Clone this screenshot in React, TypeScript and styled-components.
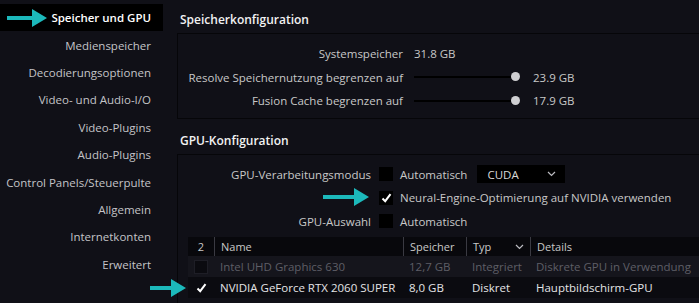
import styled, { createGlobalStyle } from "styled-components";

const Global = createGlobalStyle`
  html, body { margin: 0; padding: 0; background: #101017; }
  body { font-family: "Open Sans", "Noto Sans", sans-serif; font-size: 11.5px; color: #c8c8c8; }
`;

const Page = styled.div`
  display: flex;
  width: 699px;
  height: 303px;
  overflow: hidden;
  background: #101017;
`;

const Sidebar = styled.nav`
  width: 163px;
  flex-shrink: 0;
  padding-top: 4px;
  display: flex;
  flex-direction: column;
`;

const NavItem = styled.div<{ $active?: boolean }>`
  position: relative;
  height: 27.4px;
  display: flex;
  align-items: center;
  justify-content: flex-end;
  padding-right: 12px;
  background: ${(p) => (p.$active ? "#000" : "transparent")};
  color: ${(p) => (p.$active ? "#fff" : "#c4c4c8")};
  font-weight: ${(p) => (p.$active ? 600 : 400)};
  white-space: nowrap;
`;

const Arrow = styled.svg<{ $left: number; $top: number }>`
  position: absolute;
  left: ${(p) => p.$left}px;
  top: ${(p) => p.$top}px;
`;

const Main = styled.main`
  flex: 1;
  padding-left: 14px;
  display: flex;
  flex-direction: column;
`;

const Heading = styled.h2<{ $gap?: number }>`
  margin: 0;
  font-size: 12px;
  font-weight: 600;
  color: #f2f2f2;
  padding: ${(p) => p.$gap ?? 11}px 0 0 3px;
  height: 22px;
`;

const Box = styled.section<{ $grow?: boolean }>`
  border: 1px solid #060609;
  border-right: none;
  ${(p) => (p.$grow ? "border-bottom: none; flex: 1;" : "")}
  position: relative;
`;

const MemGrid = styled.div`
  display: grid;
  grid-template-columns: 225px 1fr;
  column-gap: 11px;
  padding: 8px 0 5px;
`;

const GpuGrid = styled.div`
  display: grid;
  grid-template-columns: 193px 1fr;
  column-gap: 8px;
  padding: 8px 0 4px;
`;

const Label = styled.div`
  height: 23.5px;
  display: flex;
  align-items: center;
  justify-content: flex-end;
  white-space: nowrap;
  position: relative;
`;

const Value = styled.div`
  height: 23.5px;
  display: flex;
  align-items: center;
  gap: 7px;
  white-space: nowrap;
`;

const SliderTrack = styled.div`
  position: relative;
  width: 102px;
  height: 2px;
  background: #000;
  margin-right: 10px;
`;

const Knob = styled.span`
  position: absolute;
  right: -4px;
  top: -4px;
  width: 9px;
  height: 9px;
  border-radius: 50%;
  background: #cfcfd2;
`;

const Check = styled.span<{ $dim?: boolean }>`
  width: 14px;
  height: 14px;
  background: ${(p) => (p.$dim ? "#0b0b10" : "#000")};
  border: ${(p) => (p.$dim ? "1px solid #1e1e26" : "none")};
  box-sizing: border-box;
  display: inline-flex;
  align-items: center;
  justify-content: center;
  flex-shrink: 0;
`;

const Select = styled.div`
  margin-left: 3px;
  width: 88px;
  height: 18px;
  background: #000;
  display: flex;
  align-items: center;
  justify-content: space-between;
  padding: 0 9px 0 10px;
  box-sizing: border-box;
  color: #d8d8d8;
`;

const Table = styled.div`
  margin-left: 10px;
  display: grid;
  grid-template-columns: 26px 189px 63px 64px 1fr;
`;

const HeadCell = styled.div<{ $center?: boolean }>`
  height: 19px;
  background: #08080c;
  display: flex;
  align-items: center;
  justify-content: ${(p) => (p.$center ? "center" : "space-between")};
  padding: 0 6px;
  border-left: 1px solid #3a3a42;
  color: #c8c8c8;
  font-size: 11px;
  &:first-child { border-left: none; }
`;

const Cell = styled.div<{ $dim?: boolean; $alt?: boolean; $first?: boolean }>`
  height: 21px;
  display: flex;
  align-items: center;
  justify-content: ${(p) => (p.$first ? "center" : "flex-start")};
  padding: 0 6px;
  white-space: nowrap;
  overflow: hidden;
  background: ${(p) => (p.$alt ? "#15151c" : "#0b0b10")};
  color: ${(p) => (p.$dim ? "#5e5e66" : "#e4e4e6")};
`;

const PointerCell = styled(Cell)`
  position: relative;
  overflow: visible;
`;

const TealArrow = ({ left, top, w }: { left: number; top: number; w: number }) => (
  <Arrow $left={left} $top={top} width={w} height={18} viewBox={`0 0 ${w} 18`}>
    <path d={`M0 7 H${w - 15} V0 L${w} 9 L${w - 15} 18 V11 H0 Z`} fill="#1cb9bb" />
  </Arrow>
);

const Tick = () => (
  <svg width="11" height="10" viewBox="0 0 11 10">
    <path d="M1.5 5.5 L4.2 8.2 L9.5 1.2" stroke="#fff" strokeWidth="2" fill="none" />
  </svg>
);

const Chevron = () => (
  <svg width="9" height="6" viewBox="0 0 9 6">
    <path d="M1 1 L4.5 4.5 L8 1" stroke="#bdbdc2" strokeWidth="1.2" fill="none" />
  </svg>
);

const nav = [
  "Speicher und GPU",
  "Medienspeicher",
  "Decodierungsoptionen",
  "Video- und Audio-I/O",
  "Video-Plugins",
  "Audio-Plugins",
  "Control Panels/Steuerpulte",
  "Allgemein",
  "Internetkonten",
  "Erweitert",
];

export default function App() {
  return (
    <Page>
      <Global />
      <Sidebar>
        {nav.map((n, i) => (
          <NavItem key={n} $active={i === 0}>
            {i === 0 && <TealArrow left={7} top={5} w={40} />}
            {n}
          </NavItem>
        ))}
      </Sidebar>
      <Main>
        <Heading>Speicherkonfiguration</Heading>
        <Box>
          <MemGrid>
            <Label>Systemspeicher</Label>
            <Value>31.8 GB</Value>
            <Label>Resolve Speichernutzung begrenzen auf</Label>
            <Value>
              <SliderTrack>
                <Knob />
              </SliderTrack>
              23.9 GB
            </Value>
            <Label>Fusion Cache begrenzen auf</Label>
            <Value>
              <SliderTrack>
                <Knob />
              </SliderTrack>
              17.9 GB
            </Value>
          </MemGrid>
        </Box>
        <Heading $gap={13}>GPU-Konfiguration</Heading>
        <Box $grow>
          <GpuGrid>
            <Label>GPU-Verarbeitungsmodus</Label>
            <Value>
              <Check />
              Automatisch
              <Select>
                CUDA
                <Chevron />
              </Select>
            </Value>
            <Label>
              <TealArrow left={145} top={2} w={46} />
            </Label>
            <Value>
              <Check>
                <Tick />
              </Check>
              Neural-Engine-Optimierung auf NVIDIA verwenden
            </Value>
            <Label>GPU-Auswahl</Label>
            <Value>
              <Check />
              Automatisch
            </Value>
          </GpuGrid>
          <Table>
            <HeadCell $center>2</HeadCell>
            <HeadCell>Name</HeadCell>
            <HeadCell>Speicher</HeadCell>
            <HeadCell>
              Typ
              <Chevron />
            </HeadCell>
            <HeadCell>Details</HeadCell>

            <Cell $alt $first>
              <Check $dim />
            </Cell>
            <Cell $alt $dim>Intel UHD Graphics 630</Cell>
            <Cell $alt $dim>12,7 GB</Cell>
            <Cell $alt $dim>Integriert</Cell>
            <Cell $alt $dim>Diskrete GPU in Verwendung</Cell>

            <PointerCell $first>
              <TealArrow left={-38} top={2} w={36} />
              <Tick />
            </PointerCell>
            <Cell>NVIDIA GeForce RTX 2060 SUPER</Cell>
            <Cell>8,0 GB</Cell>
            <Cell>Diskret</Cell>
            <Cell>Hauptbildschirm-GPU</Cell>
          </Table>
        </Box>
      </Main>
    </Page>
  );
}
